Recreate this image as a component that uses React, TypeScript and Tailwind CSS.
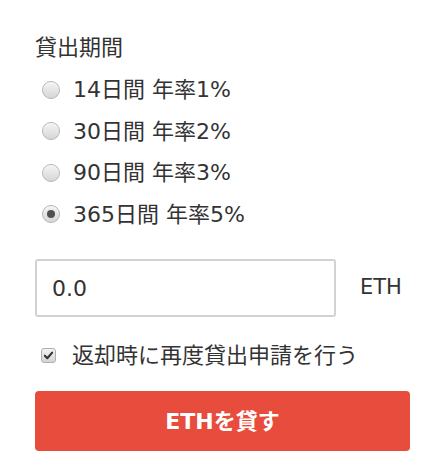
import { useState } from "react";

const periods = [
  { label: "14日間 年率1%", value: 14 },
  { label: "30日間 年率2%", value: 30 },
  { label: "90日間 年率3%", value: 90 },
  { label: "365日間 年率5%", value: 365 },
];

// Old-style grey radio, drawn by hand so it looks the same everywhere
const Radio = ({ checked }: { checked: boolean }) => (
  <span className="flex h-[18px] w-[18px] items-center justify-center rounded-full border border-[#b5b5b5] bg-gradient-to-b from-[#f4f4f4] to-[#d6d6d6] shadow-[inset_0_1px_1px_rgba(255,255,255,0.8)]">
    {checked && <span className="h-[8px] w-[8px] rounded-full bg-[#505050]" />}
  </span>
);

const Checkbox = ({ checked }: { checked: boolean }) => (
  <span className="flex h-[15px] w-[15px] items-center justify-center rounded-[3px] border border-[#b0b0b0] bg-gradient-to-b from-[#f2f2f2] to-[#d4d4d4]">
    {checked && (
      <svg viewBox="0 0 12 12" className="h-[11px] w-[11px]" aria-hidden="true">
        <path d="M2 6.2 L4.7 9 L10 2.8" fill="none" stroke="#333" strokeWidth="2.2" strokeLinecap="round" strokeLinejoin="round" />
      </svg>
    )}
  </span>
);

export default function App() {
  const [period, setPeriod] = useState(365);
  const [again, setAgain] = useState(true);

  return (
    <div className="h-[467px] w-[432px] overflow-hidden bg-white pl-[35px] pr-[22px] pt-[32px] text-[#333] font-['DejaVu_Sans','Noto_Sans_CJK_JP',sans-serif]">
      {/* Period */}
      <div className="flex h-[30px] items-center text-[22px]">貸出期間</div>
      <div className="mt-[7px] flex flex-col">
        {periods.map((p) => (
          <label
            key={p.value}
            className="flex h-[41.5px] cursor-pointer items-center gap-[13px] pl-[7px] text-[22px]"
            onClick={() => setPeriod(p.value)}
          >
            <Radio checked={period === p.value} />
            <span>{p.label}</span>
          </label>
        ))}
      </div>

      {/* Amount */}
      <div className="mt-[24px] flex items-center">
        <div className="flex h-[58px] w-[301px] items-center rounded-[3px] border-2 border-[#d2d2d2] px-[15px] text-[22px]">
          0.0
        </div>
        <span className="ml-[24px] text-[21px]">ETH</span>
      </div>

      {/* Re-lend */}
      <label
        className="mt-[23px] flex h-[30px] cursor-pointer items-center gap-[16px] pl-[6px] text-[22px]"
        onClick={() => setAgain(!again)}
      >
        <Checkbox checked={again} />
        <span>返却時に再度貸出申請を行う</span>
      </label>

      <button className="mt-[21px] flex h-[60px] w-full items-center justify-center rounded-[4px] bg-[#e74c3c] text-[22px] font-bold text-white">
        ETHを貸す
      </button>
    </div>
  );
}
